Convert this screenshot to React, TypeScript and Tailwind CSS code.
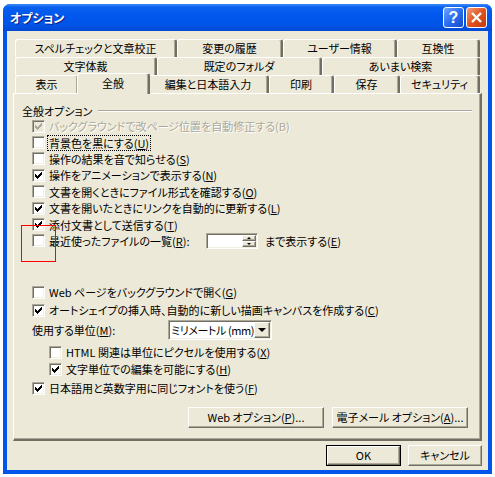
import type { ReactNode } from "react";

const FONT =
  "font-['Noto_Sans_CJK_JP','Noto_Sans',sans-serif] [font-feature-settings:'palt']";

const RAISED =
  "border border-t-white border-l-white border-r-[#716F64] border-b-[#716F64] shadow-[inset_-1px_-1px_0_#ACA899]";
const SUNKEN =
  "border border-t-[#ACA899] border-l-[#ACA899] border-r-white border-b-white shadow-[inset_1px_1px_0_#716F64,inset_-1px_-1px_0_#F1EFE2]";

type TabDef = { label: string; w: string; selected?: boolean };

const ROW1: TabDef[] = [
  { label: "スペルチェックと文章校正", w: "w-[162px]" },
  { label: "変更の履歴", w: "w-[106px]" },
  { label: "ユーザー情報", w: "w-[114px]" },
  { label: "互換性", w: "w-[83px]" },
];
const ROW2: TabDef[] = [
  { label: "文字体裁", w: "w-[142px]" },
  { label: "既定のフォルダ", w: "w-[165px]" },
  { label: "あいまい検索", w: "w-[158px]" },
];
const ROW3: TabDef[] = [
  { label: "表示", w: "w-[64px]" },
  { label: "全般", w: "w-[73px]", selected: true },
  { label: "編集と日本語入力", w: "w-[121px]" },
  { label: "印刷", w: "w-[65px]" },
  { label: "保存", w: "w-[66px]" },
  { label: "セキュリティ", w: "w-[80px]" },
];

function Tab({ tab }: { tab: TabDef }) {
  return (
    <div
      className={`flex shrink-0 items-center justify-center rounded-t-[3px] border-l border-t border-l-white border-t-white border-r-2 border-r-[#716F64] bg-[#ECE9D8] shadow-[inset_-1px_0_0_#ACA899] ${tab.w} ${
        tab.selected ? "relative z-10 -mx-[2px] -mb-px h-[21px] pb-[2px]" : "h-[18px]"
      }`}
    >
      {tab.label}
    </div>
  );
}

function TabRow({ tabs }: { tabs: TabDef[] }) {
  return (
    <div className="flex h-[18px] items-end px-[2px]">
      {tabs.map((t) => (
        <Tab key={t.label} tab={t} />
      ))}
    </div>
  );
}

function Tick({ color }: { color: string }) {
  return (
    <svg
      viewBox="0 0 13 13"
      className="absolute left-[-1px] top-[-1px] size-[13px]"
      shapeRendering="crispEdges"
    >
      <path
        fill={color}
        d="M3 5h1v3h-1z M4 6h1v3h-1z M5 7h1v3h-1z M6 6h1v3h-1z M7 5h1v3h-1z M8 4h1v3h-1z M9 3h1v3h-1z"
      />
    </svg>
  );
}

function CheckBox({ checked, disabled }: { checked?: boolean; disabled?: boolean }) {
  return (
    <span
      className={`relative box-border block size-[13px] shrink-0 ${SUNKEN} ${
        disabled ? "bg-[#ECE9D8]" : "bg-white"
      }`}
    >
      {checked ? <Tick color={disabled ? "#ACA899" : "#000"} /> : null}
    </span>
  );
}

function CheckRow({
  checked,
  disabled,
  focus,
  className = "h-[16.4px]",
  children,
}: {
  checked?: boolean;
  disabled?: boolean;
  focus?: boolean;
  className?: string;
  children: ReactNode;
}) {
  return (
    <div className={`flex items-center ${className}`}>
      <CheckBox checked={checked} disabled={disabled} />
      <span
        className={`ml-[2px] whitespace-nowrap px-px leading-[14px] ${
          focus ? "border border-dotted border-black" : "border border-transparent"
        } ${disabled ? "text-[#ACA899] [text-shadow:1px_1px_0_#fff]" : ""}`}
      >
        {children}
      </span>
    </div>
  );
}

function SpinBox() {
  return (
    <div className={`flex h-[16px] w-[52px] bg-white ${SUNKEN}`}>
      <div className="flex-1" />
      <div className="flex w-[15px] flex-col py-px pr-px">
        <div className={`flex flex-1 items-center justify-center bg-[#ECE9D8] ${RAISED}`}>
          <span className="block border-x-[2px] border-b-[2px] border-x-transparent border-b-black" />
        </div>
        <div className={`flex flex-1 items-center justify-center bg-[#ECE9D8] ${RAISED}`}>
          <span className="block border-x-[2px] border-t-[2px] border-x-transparent border-t-black" />
        </div>
      </div>
    </div>
  );
}

function Select() {
  return (
    <div className={`flex h-[20px] w-[104px] items-center bg-white ${SUNKEN}`}>
      <span className="flex-1 overflow-hidden whitespace-nowrap pl-[2px] tracking-[-0.4px]">
        ミリメートル (mm)
      </span>
      <div
        className={`mr-px flex h-[16px] w-[16px] shrink-0 items-center justify-center bg-[#ECE9D8] ${RAISED}`}
      >
        <span className="block border-x-[4px] border-t-[4px] border-x-transparent border-t-black" />
      </div>
    </div>
  );
}

function Button({
  children,
  w,
  isDefault,
}: {
  children: ReactNode;
  w: string;
  isDefault?: boolean;
}) {
  return (
    <div className={`${w} ${isDefault ? "border border-black" : ""}`}>
      <div
        className={`flex items-center justify-center whitespace-nowrap bg-[#ECE9D8] ${RAISED} ${
          isDefault ? "h-[19px]" : "h-[21px]"
        }`}
      >
        {children}
      </div>
    </div>
  );
}

function TitleButton({ kind }: { kind: "help" | "close" }) {
  return (
    <div
      className={`flex size-[21px] items-center justify-center rounded-[3px] border border-white ${
        kind === "help"
          ? "bg-[linear-gradient(135deg,#6FA4FF_0%,#2B6FF0_50%,#1448C8_100%)]"
          : "bg-[linear-gradient(135deg,#F39B7A_0%,#E0541F_50%,#C2380E_100%)]"
      }`}
    >
      {kind === "help" ? (
        <span className="font-['Liberation_Sans',sans-serif] text-[16px] font-bold leading-none text-white">
          ?
        </span>
      ) : (
        <svg viewBox="0 0 13 13" className="size-[13px]">
          <path d="M2 2 L11 11 M11 2 L2 11" stroke="#fff" strokeWidth="2.4" />
        </svg>
      )}
    </div>
  );
}

export default function App() {
  return (
    <div className={`relative h-[477px] w-[495px] bg-white pl-[3px] pt-[4px] text-[11px] text-black ${FONT}`}>
      <div className="flex h-[470px] w-[489px] flex-col overflow-hidden rounded-t-[7px] bg-[#0055EA]">
        {/* title bar */}
        <div className="flex h-[27px] shrink-0 items-center bg-[linear-gradient(to_bottom,#3D8BF7_0%,#0A5FF0_12%,#0057EC_45%,#0055E8_75%,#0049D4_100%)] pl-[7px] pr-[5px]">
          <span className="flex-1 text-[12px] font-bold text-white [text-shadow:1px_1px_0_#0A1E80]">
            オプション
          </span>
          <div className="flex gap-[2px]">
            <TitleButton kind="help" />
            <TitleButton kind="close" />
          </div>
        </div>

        {/* body */}
        <div className="flex flex-1 flex-col border-x-[4px] border-b-[4px] border-[#0055EA] bg-[#ECE9D8] px-[6px] pt-[8px]">
          <TabRow tabs={ROW1} />
          <TabRow tabs={ROW2} />
          <TabRow tabs={ROW3} />

          <div className="h-[348px] border-l border-t border-l-white border-t-white border-r-2 border-b-2 border-r-[#716F64] border-b-[#716F64] bg-[#ECE9D8] shadow-[inset_-1px_-1px_0_#ACA899] pt-[10px]">
            <div className="flex h-[14px] items-center pl-[8px] pr-[8px]">
              <span className="leading-[14px]">全般オプション</span>
              <div className="ml-[6px] flex-1 border-b border-t border-b-white border-t-[#ACA899]" />
            </div>

            <div className="flex flex-col pl-[18px]">
              <CheckRow checked disabled>
                バックグラウンドで改ページ位置を自動修正する(B)
              </CheckRow>
              <CheckRow focus>
                背景色を黒にする(<u>U</u>)
              </CheckRow>
              <CheckRow>
                操作の結果を音で知らせる(<u>S</u>)
              </CheckRow>
              <CheckRow checked>
                操作をアニメーションで表示する(<u>N</u>)
              </CheckRow>
              <CheckRow>
                文書を開くときにファイル形式を確認する(<u>O</u>)
              </CheckRow>
              <CheckRow checked>
                文書を開いたときにリンクを自動的に更新する(<u>L</u>)
              </CheckRow>
              <CheckRow checked>
                添付文書として送信する(<u>T</u>)
              </CheckRow>
              <div className="flex h-[16.4px] items-center">
                <CheckBox />
                <span className="ml-[2px] w-[159px] whitespace-nowrap border border-transparent px-px leading-[14px]">
                  最近使ったファイルの一覧(<u>R</u>):
                </span>
                <SpinBox />
                <span className="ml-[7px] whitespace-nowrap">
                  まで表示する(<u>E</u>)
                </span>
              </div>

              <CheckRow className="mt-[34px] h-[18px]">
                Web ページをバックグラウンドで開く(<u>G</u>)
              </CheckRow>
              <CheckRow checked className="h-[18px]">
                オートシェイプの挿入時、自動的に新しい描画キャンバスを作成する(<u>C</u>)
              </CheckRow>
              <div className="flex h-[22px] items-center">
                <span className="w-[136px] whitespace-nowrap">
                  使用する単位(<u>M</u>):
                </span>
                <Select />
              </div>
              <div className="mt-[2px] flex flex-col pl-[17px]">
                <CheckRow className="h-[18px]">
                  HTML 関連は単位にピクセルを使用する(<u>X</u>)
                </CheckRow>
                <CheckRow checked className="h-[16px]">
                  文字単位での編集を可能にする(<u>H</u>)
                </CheckRow>
              </div>
              <CheckRow checked className="mt-[2px] h-[18px]">
                日本語用と英数字用に同じフォントを使う(<u>F</u>)
              </CheckRow>
            </div>

            <div className="mt-[10px] flex justify-end gap-[8px] pr-[12px]">
              <Button w="w-[136px]">
                Web オプション(<u>P</u>)...
              </Button>
              <Button w="w-[136px]">
                電子メール オプション(<u>A</u>)...
              </Button>
            </div>
          </div>

          <div className="mt-[4px] flex justify-end gap-[7px]">
            <Button w="w-[75px]" isDefault>
              OK
            </Button>
            <Button w="w-[74px]">キャンセル</Button>
          </div>
        </div>
      </div>

      {/* red annotation box */}
      <div className="pointer-events-none absolute left-[21px] top-[225px] h-[37px] w-[35px] border border-[#FF0000]" />
    </div>
  );
}
